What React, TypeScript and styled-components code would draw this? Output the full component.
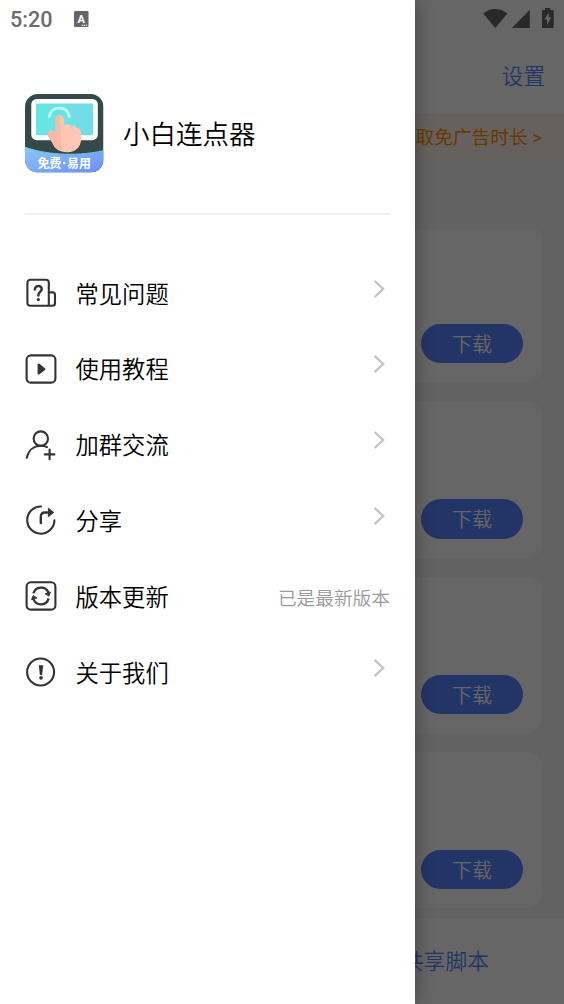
import React from 'react';
import styled, { createGlobalStyle } from 'styled-components';

const GlobalStyle = createGlobalStyle`
  * { box-sizing: border-box; }
  html, body { margin: 0; padding: 0; overflow: hidden; }
  body { font-family: Roboto, "Noto Sans CJK SC", sans-serif; font-weight: 350; }
`;

const Screen = styled.div`
  position: relative;
  width: 564px;
  height: 1004px;
  overflow: hidden;
  background: #fff;
`;

const Page = styled.div`
  display: flex;
  flex-direction: column;
  height: 100%;
  background: #f5f5f5;
`;

const StatusIcons = styled.div`
  display: flex;
  justify-content: flex-end;
  height: 40px;
  background: #fff;
`;

const Toolbar = styled.header`
  display: flex;
  align-items: center;
  justify-content: flex-end;
  height: 73px;
  padding: 0 19px 4px 0;
  background: #fff;
  color: #5886ff;
  font-size: 21.6px;
`;

const Banner = styled.div`
  display: flex;
  align-items: center;
  justify-content: flex-end;
  height: 48px;
  padding: 0 22px 3px 0;
  background: #fff3ea;
  color: #ff8f00;
  font-size: 18.7px;
  font-weight: 400;
  white-space: nowrap;
`;

const List = styled.div`
  flex: 1;
  display: flex;
  flex-direction: column;
  gap: 19.3px;
  margin-top: 68px;
  padding: 0 22px;
  overflow: hidden;
`;

const Card = styled.section`
  flex: none;
  display: flex;
  align-items: flex-end;
  justify-content: flex-end;
  height: 156px;
  padding: 0 19px 19px 0;
  border-radius: 15px;
  background: #fff;
  &:first-child { margin-top: -2.6px; }
`;

const Download = styled.button`
  width: 102px;
  height: 39.4px;
  padding: 0;
  border: 0;
  border-radius: 20px;
  background: #5886ff;
  color: #fff;
  font: 350 20px "Noto Sans CJK SC", sans-serif;
  line-height: 39.4px;
`;

const BottomNav = styled.nav`
  display: flex;
  align-items: center;
  justify-content: flex-end;
  height: 86px;
  padding: 0 75px 3px 0;
  background: #fff;
  color: #5886ff;
  font-size: 21.8px;
`;

const Scrim = styled.div`
  position: absolute;
  inset: 0;
  background: rgba(0, 0, 0, 0.6);
`;

const Drawer = styled.aside`
  position: absolute;
  inset: 0 auto 0 0;
  width: 415px;
  display: flex;
  flex-direction: column;
  background: #fff;
  box-shadow: 2px 0 16px rgba(0, 0, 0, 0.28);
`;

const Clock = styled.div`
  display: flex;
  align-items: center;
  gap: 21px;
  height: 40px;
  padding: 0 0 1px 10px;
  color: #6c6c6c;
  font: 500 21.6px Roboto, sans-serif;
  svg { margin-top: -1px; }
`;

const Profile = styled.div`
  display: flex;
  align-items: center;
  gap: 19px;
  height: 174.5px;
  margin: 0 25px;
  padding-bottom: 13px;
  padding-top: 27px;
  border-bottom: 2px solid #f0f0f0;
  color: #000;
  font-size: 26.5px;
`;

const AppName = styled.h1`
  margin: 0 0 2px;
  font: inherit;
`;

const Menu = styled.ul`
  display: flex;
  flex-direction: column;
  list-style: none;
  margin: 40.7px 25px 0;
  padding: 0;
`;

const Row = styled.li`
  display: flex;
  align-items: center;
  height: 75.8px;
`;

const RowIcon = styled.svg`
  flex: none;
  width: 32px;
  height: 32px;
  margin-right: 18.5px;
  fill: none;
  stroke: #333;
  stroke-width: 2.1;
  stroke-linecap: round;
  stroke-linejoin: round;
`;

const Label = styled.span`
  flex: 1;
  padding-bottom: 1px;
  color: #000;
  font-size: 23.3px;
`;

const Note = styled.span`
  color: #999;
  font-size: 18.7px;
  padding-top: 1px;
`;

const Chevron = styled.svg`
  width: 12px;
  height: 18px;
  margin: 0 5px 9px 0;
  fill: none;
  stroke: #c1c1c3;
  stroke-width: 2.2;
`;

const LogoText = styled.text`
  font: 700 12.5px "Noto Sans CJK SC", sans-serif;
  fill: #fff;
`;

const Logo = () => (
  <svg width="79" height="79" viewBox="0 0 79.5 79.5">
    <defs>
      <clipPath id="tile"><rect width="79" height="79" rx="13" /></clipPath>
      <linearGradient id="wave" x1="0" y1="0" x2="1" y2="1">
        <stop offset="0" stopColor="#8ec4fb" />
        <stop offset="1" stopColor="#6990fa" />
      </linearGradient>
      <linearGradient id="display">
        <stop offset="0" stopColor="#63e8e2" />
        <stop offset="0.5" stopColor="#6fe0e4" />
        <stop offset="1" stopColor="#72dce5" />
      </linearGradient>
    </defs>
    <g clipPath="url(#tile)">
      <rect width="79" height="79" fill="#35484a" />
      <rect x="6.3" y="5" width="67" height="41.5" rx="5.5" fill="#fff" />
      <rect x="11" y="9.6" width="57.5" height="32" rx="1.5" fill="url(#display)" />
      <path d="M0 53.5C18 60 48 64 79 57V79H0Z" fill="url(#wave)" />
      <path d="M0 53.5C18 60 48 64 79 57" fill="none" stroke="#69cfd9" strokeWidth="1" />
      <path d="M24.5 22.5C26 11.5 42.5 11 44.5 22.5" fill="none" stroke="#b9f8f6" strokeWidth="3.2" strokeLinecap="round" />
      <path d="M30.8 25C30.8 20.3 38.5 20.3 38.7 25L39.2 31.5C41.5 29.3 44.5 30.3 46 32.3C48.5 31 51 32 52 34.2C55.5 34 56.5 37 56.5 40V45C56.5 53 51 58.5 43 58.5C34 58.5 30 55 28 50L23.3 42C21.8 38.2 25 36 28 37L31 38.5Z" fill="#ffc6b4" />
      <path d="M30.8 25C30.8 22.7 32.5 21.5 34.7 21.5L37.3 56.8C32 56 29.5 53.5 28 50L23.3 42C21.8 38.2 25 36 28 37L31 38.5Z" fill="#fcb8a4" />
      <LogoText x="12.5" y="74.5" textLength="24" lengthAdjust="spacingAndGlyphs">免费</LogoText>
      <circle cx="39.4" cy="69.5" r="1.3" fill="#fff" />
      <LogoText x="42.3" y="74.5" textLength="24" lengthAdjust="spacingAndGlyphs">易用</LogoText>
    </g>
  </svg>
);

const icons = {
  help: (
    <>
      <path d="M26.3 28.8H5.2A2.8 2.8 0 0 1 2.4 26V5.6A2.8 2.8 0 0 1 5.2 2.8H21A2.8 2.8 0 0 1 23.8 5.6V28.5M24 15.4H27.5A2.5 2.5 0 0 1 30 17.9V26A2.8 2.8 0 0 1 27.2 28.8H25" />
      <path d="M9.9 12.4C9.8 7.9 16.8 8 16.7 12.2C16.6 15 13.3 14.9 13.3 18.4" strokeWidth="2.5" />
      <circle cx="13.3" cy="22.5" r="1.6" fill="#333" stroke="none" />
    </>
  ),
  play: (
    <>
      <rect x="1.6" y="2.4" width="28.8" height="27.2" rx="4.2" />
      <path d="M13.7 11.7L19.3 16.1L13.7 20.5Z" fill="#333" strokeWidth="2.2" />
    </>
  ),
  group: (
    <>
      <circle cx="15.8" cy="9.6" r="7.2" />
      <path d="M1.8 28.7C3.5 21.2 8.8 16.8 15.8 16.8C18.3 16.8 20.2 17.2 22 18.1M19.8 25.4H29.4M24.6 20.6V30.2" />
    </>
  ),
  share: (
    <>
      <path d="M16 2.5A13.6 13.6 0 1 0 29.4 16.2" />
      <path d="M15.8 19V12.5Q15.8 8.5 19.8 8.5H25" strokeWidth="2.4" />
      <path d="M23.7 4.4L28.5 8.4L23.7 12.5Z" fill="#333" strokeWidth="1" />
    </>
  ),
  update: (
    <>
      <rect x="1.6" y="2.2" width="28.8" height="27.4" rx="4.2" />
      <path d="M8.4 13.4A8 8 0 0 1 23.5 12.6M23.7 18.4A8 8 0 0 1 8.5 19.2" strokeWidth="2.3" strokeLinecap="butt" />
      <path d="M20.4 13.6L25.4 12L24 15.8ZM11.6 18.1L6.6 19.7L8 15.9Z" fill="#333" strokeWidth="1" />
    </>
  ),
  about: (
    <>
      <circle cx="15.6" cy="16" r="13.5" />
      <path d="M13.8 9.3H18.2L17.1 19H14.9Z" fill="#333" stroke="none" />
      <circle cx="16" cy="21.9" r="1.8" fill="#333" stroke="none" />
    </>
  ),
};

const menu: { icon: keyof typeof icons; label: string; note?: string }[] = [
  { icon: 'help', label: '常见问题' },
  { icon: 'play', label: '使用教程' },
  { icon: 'group', label: '加群交流' },
  { icon: 'share', label: '分享' },
  { icon: 'update', label: '版本更新', note: '已是最新版本' },
  { icon: 'about', label: '关于我们' },
];

const SystemIcons = () => (
  <svg width="84" height="40" viewBox="480 0 84 40" fill="#666">
    <path d="M483.2 13.4Q495.3 4.8 507.4 13.4L495.3 28Z" />
    <path d="M529.8 9.8V28H511.8Z" />
    <path fillRule="evenodd" d="M545 8H550.3V10H553.7V28H542V10H545ZM548.7 12.5L544.4 19.5H547V25.2L551.2 17.3H548.7Z" />
  </svg>
);

const KeyboardText = styled.text`
  font: 700 11px Roboto, sans-serif;
  fill: #fff;
`;

export default function App() {
  return (
    <Screen>
      <GlobalStyle />
      <Page>
        <StatusIcons><SystemIcons /></StatusIcons>
        <Toolbar>设置</Toolbar>
        <Banner>取免广告时长 &gt;</Banner>
        <List>
          {[0, 1, 2, 3].map((n) => (
            <Card key={n}><Download>下载</Download></Card>
          ))}
        </List>
        <BottomNav>共享脚本</BottomNav>
      </Page>
      <Scrim />
      <Drawer>
        <Clock>
          5:20
          <svg width="15" height="16" viewBox="0 0 15 16">
            <rect width="14.5" height="16" rx="1.2" fill="#666" />
            <KeyboardText x="3.4" y="11.8">A</KeyboardText>
            <path d="M7.5 14.2H13.5" stroke="#fff" strokeWidth="1.1" strokeDasharray="1.4 .7" />
          </svg>
        </Clock>
        <Profile>
          <Logo />
          <AppName>小白连点器</AppName>
        </Profile>
        <Menu>
          {menu.map(({ icon, label, note }) => (
            <Row key={icon}>
              <RowIcon viewBox="0 0 32 32">{icons[icon]}</RowIcon>
              <Label>{label}</Label>
              {note ? <Note>{note}</Note> : (
                <Chevron viewBox="0 0 12 18"><path d="M1.6 1L10.2 9L1.6 17" /></Chevron>
              )}
            </Row>
          ))}
        </Menu>
      </Drawer>
    </Screen>
  );
}
